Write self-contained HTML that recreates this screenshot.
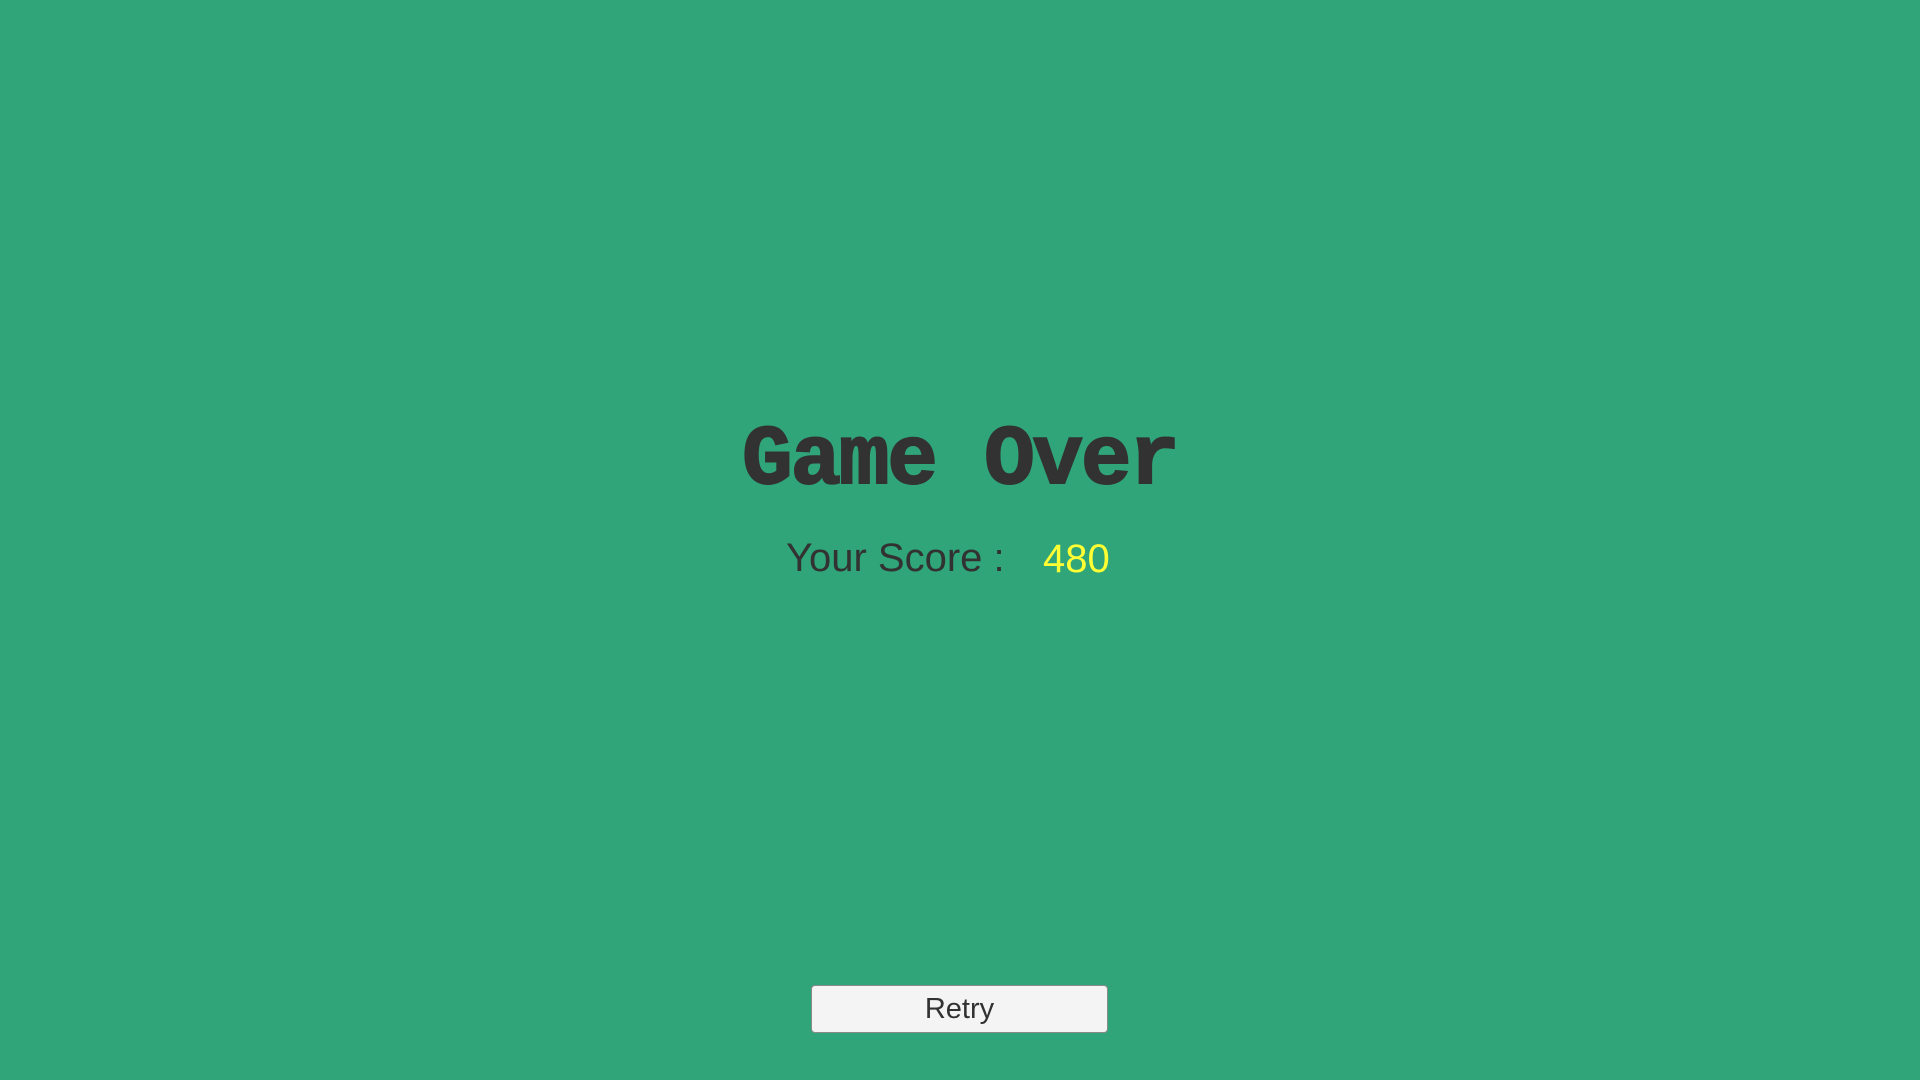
<!DOCTYPE html>
<html><head><meta charset="utf-8"><style>
html,body{margin:0;padding:0;width:1920px;height:1080px;overflow:hidden;background:#2fa579;position:relative;font-family:"Liberation Sans",sans-serif}
.t{position:absolute;left:0;width:1920px;top:412px;text-align:center;font-family:"Liberation Mono",monospace;font-weight:bold;font-size:84px;line-height:100px;color:#323232;letter-spacing:-2px;-webkit-text-stroke:2px #323232}
.s{position:absolute;left:786px;top:533px;font-size:40px;line-height:50px;color:#323232}
.n{position:absolute;left:1043px;top:534px;font-size:40px;line-height:50px;color:#ffff33}
.b{position:absolute;left:811px;top:985px;width:295px;height:46px;background:#f4f4f4;border:1px solid #8a8a8a;border-radius:4px;text-align:center;font-size:29px;line-height:47px;color:#323232}
</style></head><body>
<div class="t">Game Over</div>
<div class="s">Your Score :</div>
<div class="n">480</div>
<div class="b">Retry</div>
</body></html>
